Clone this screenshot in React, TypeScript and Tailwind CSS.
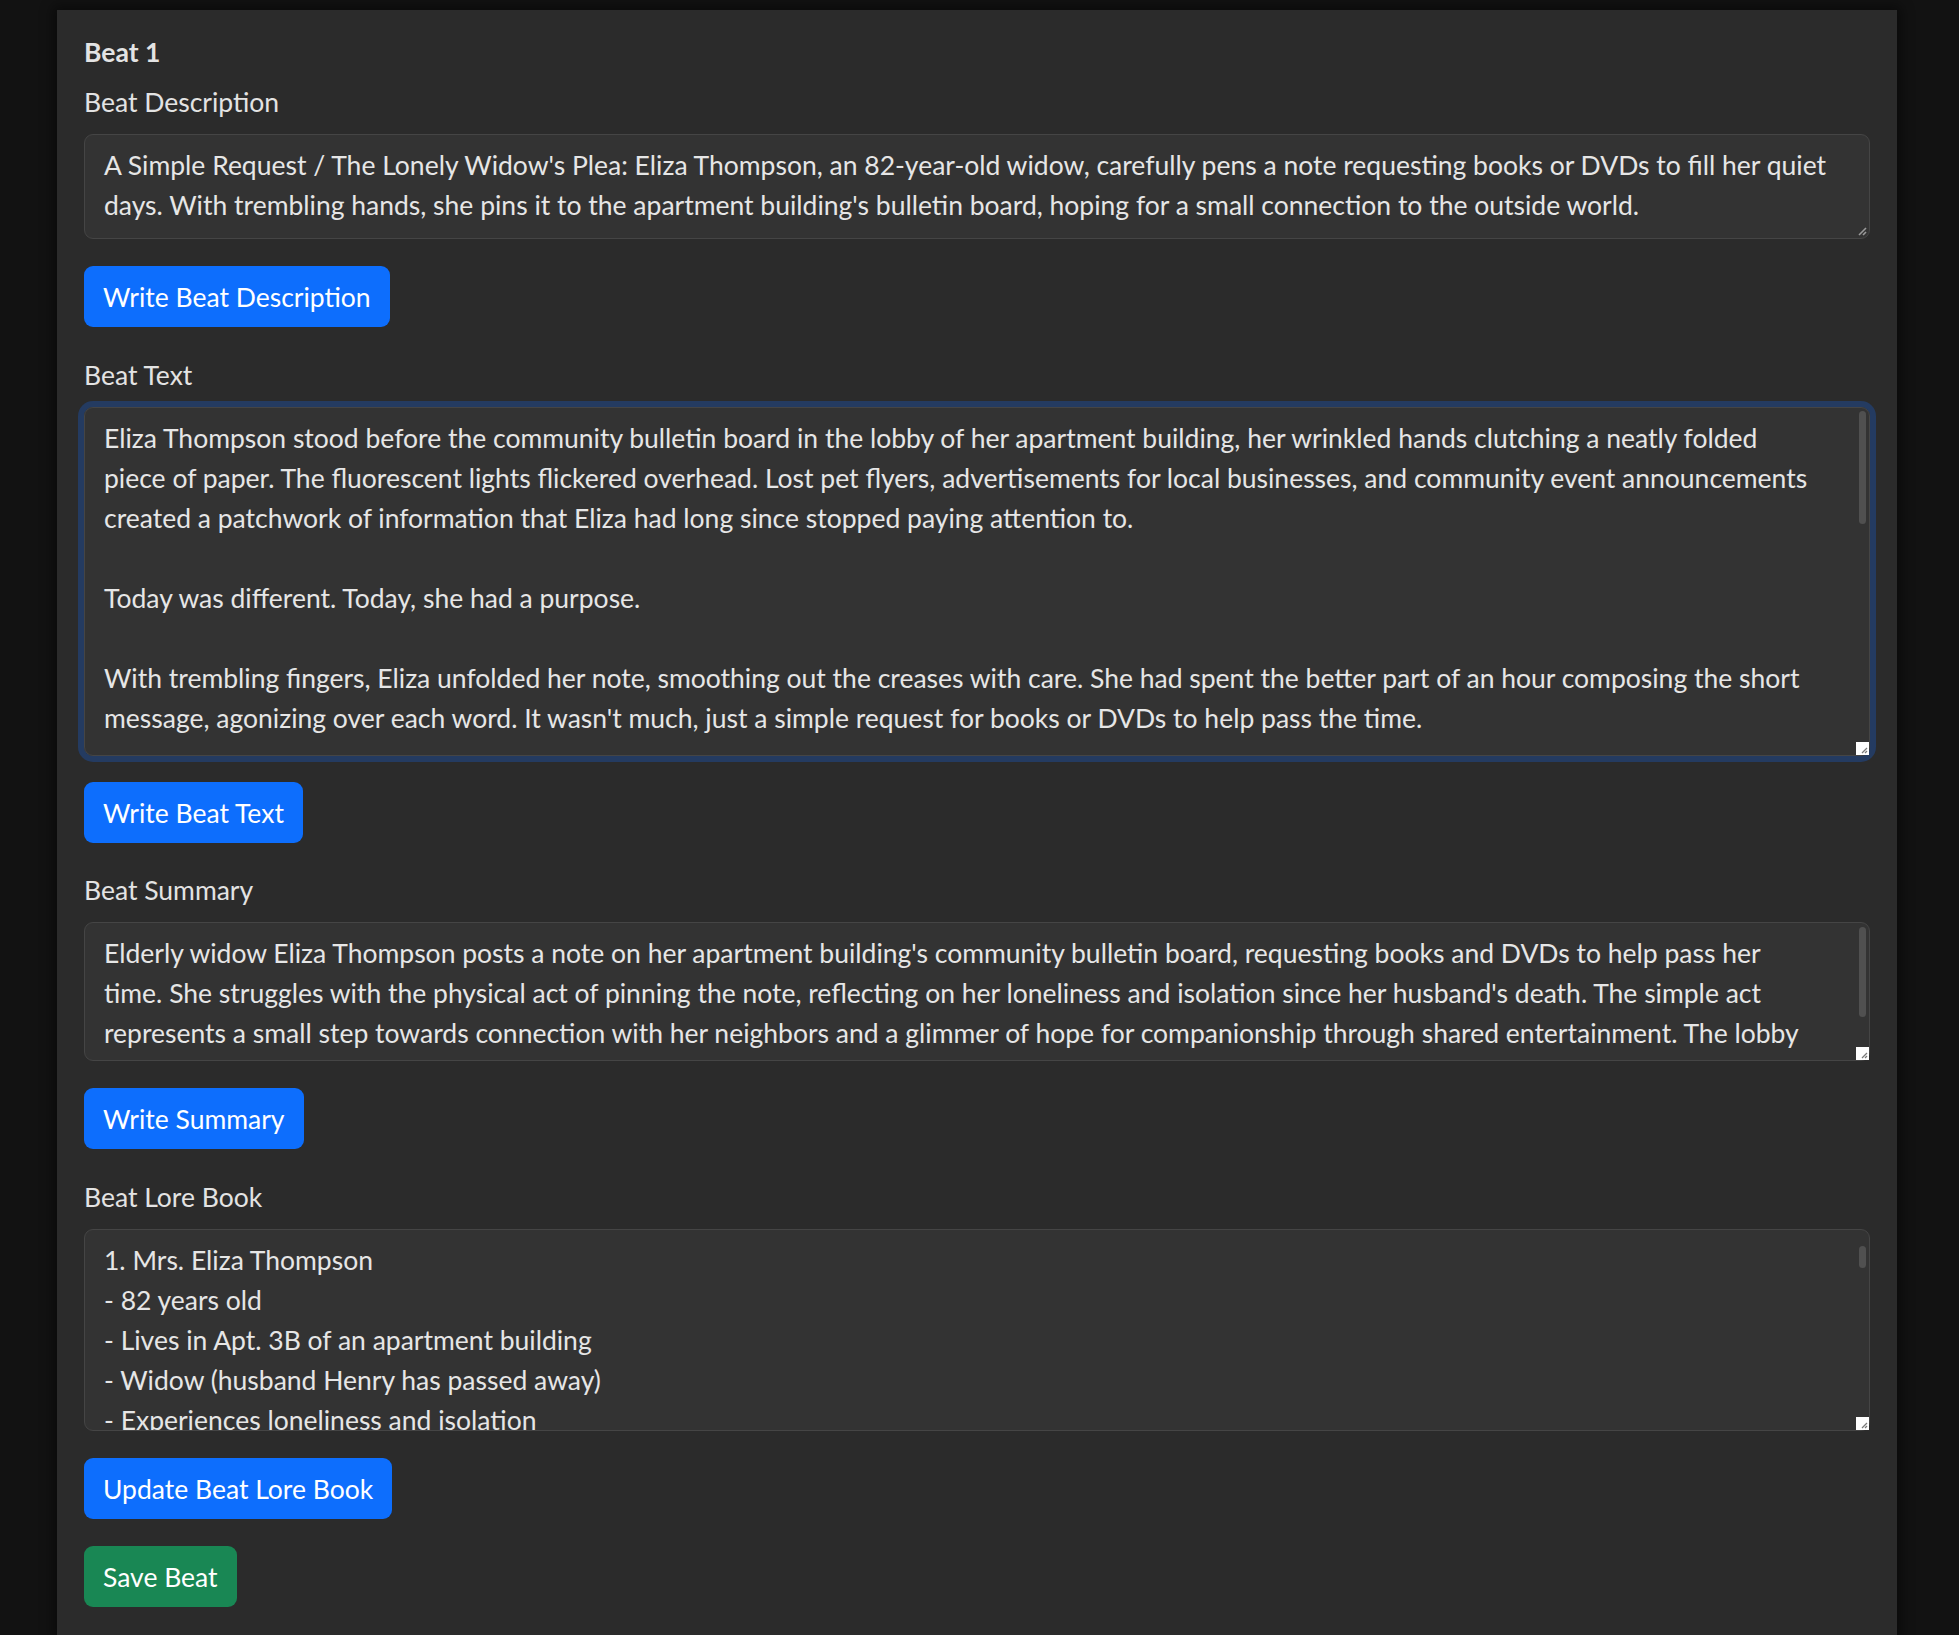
import React from 'react';

const descText =
  "A Simple Request / The Lonely Widow's Plea: Eliza Thompson, an 82-year-old widow, carefully pens a note requesting books or DVDs to fill her quiet\ndays. With trembling hands, she pins it to the apartment building's bulletin board, hoping for a small connection to the outside world.";

const beatText =
  "Eliza Thompson stood before the community bulletin board in the lobby of her apartment building, her wrinkled hands clutching a neatly folded\npiece of paper. The fluorescent lights flickered overhead. Lost pet flyers, advertisements for local businesses, and community event announcements\ncreated a patchwork of information that Eliza had long since stopped paying attention to.\n\nToday was different. Today, she had a purpose.\n\nWith trembling fingers, Eliza unfolded her note, smoothing out the creases with care. She had spent the better part of an hour composing the short\nmessage, agonizing over each word. It wasn't much, just a simple request for books or DVDs to help pass the time.\n\n";

const summaryText =
  "Elderly widow Eliza Thompson posts a note on her apartment building's community bulletin board, requesting books and DVDs to help pass her\ntime. She struggles with the physical act of pinning the note, reflecting on her loneliness and isolation since her husband's death. The simple act\nrepresents a small step towards connection with her neighbors and a glimmer of hope for companionship through shared entertainment. The lobby";

const loreText =
  '1. Mrs. Eliza Thompson\n- 82 years old\n- Lives in Apt. 3B of an apartment building\n- Widow (husband Henry has passed away)\n- Experiences loneliness and isolation\n- Hopes for connection with her neighbors';

function Grip() {
  return (
    <svg width="10" height="10" viewBox="0 0 10 10" className="block">
      <path d="M9 2 L2 9" stroke="#9a9a9a" strokeWidth="1.6" />
      <path d="M9 6 L6 9" stroke="#9a9a9a" strokeWidth="1.6" />
    </svg>
  );
}

interface FieldProps {
  label: string;
  value: string;
  height: string;
  focused?: boolean;
  thumb?: { top: string; height: string };
}

function Field({ label, value, height, focused, thumb }: FieldProps) {
  return (
    <div>
      <label className="block mb-[12px]">{label}</label>
      <div
        className={`relative rounded-[9px] ${
          focused ? 'shadow-[0_0_0_6px_#243b61]' : ''
        }`}
      >
        <textarea
          readOnly
          defaultValue={value}
          className={`block w-full ${height} resize-none overflow-hidden rounded-[9px] border border-[#454545] bg-[#333333] px-[19px] py-[10px] text-[#e6e6e6] outline-none whitespace-pre-wrap`}
        />
        {thumb && (
          <span
            className={`absolute right-[4px] w-[7px] rounded-full bg-[#505050] ${thumb.top} ${thumb.height}`}
          />
        )}
        {thumb ? (
          <span className="absolute right-[1px] bottom-[1px] flex h-[13px] w-[13px] items-end justify-end bg-white pr-[1px] pb-[1px]">
            <svg width="8" height="8" viewBox="0 0 8 8" className="block">
              <path d="M7 2 L2 7" stroke="#7a7a7a" strokeWidth="1.3" />
              <path d="M7 5 L5 7" stroke="#7a7a7a" strokeWidth="1.3" />
            </svg>
          </span>
        ) : (
          <span className="absolute right-[3px] bottom-[3px]">
            <Grip />
          </span>
        )}
      </div>
    </div>
  );
}

function Btn({ children, green }: { children: React.ReactNode; green?: boolean }) {
  return (
    <button
      className={`h-[61px] rounded-[9px] px-[19px] text-white ${
        green ? 'bg-[#198754]' : 'bg-[#0d6efd]'
      }`}
    >
      {children}
    </button>
  );
}

export default function App() {
  return (
    <div className="min-h-[1635px] bg-[#121212] font-['Lato',sans-serif] text-[26.5px] leading-[40px] text-[#e3e3e3]">
      <div className="ml-[57px] mr-[62px] pt-[10px]">
        <div className="min-h-[1625px] bg-[#2b2b2b] p-[27px] shadow-[0_0_12px_4px_rgba(0,0,0,0.45)]">
          <h6 className="mb-[14px] font-bold leading-[32px] mt-[-1px]">Beat 1</h6>

          <Field label="Beat Description" value={descText} height="h-[105px]" />
          <div className="mt-[27px]">
            <Btn>Write Beat Description</Btn>
          </div>

          <div className="mt-[28px]">
            <Field
              label="Beat Text"
              value={beatText}
              height="h-[349px]"
              focused
              thumb={{ top: 'top-[4px]', height: 'h-[113px]' }}
            />
          </div>
          <div className="mt-[26px]">
            <Btn>Write Beat Text</Btn>
          </div>

          <div className="mt-[27px]">
            <Field
              label="Beat Summary"
              value={summaryText}
              height="h-[139px]"
              thumb={{ top: 'top-[5px]', height: 'h-[90px]' }}
            />
          </div>
          <div className="mt-[27px]">
            <Btn>Write Summary</Btn>
          </div>

          <div className="mt-[28px]">
            <Field
              label="Beat Lore Book"
              value={loreText}
              height="h-[202px]"
              thumb={{ top: 'top-[17px]', height: 'h-[22px]' }}
            />
          </div>
          <div className="mt-[27px]">
            <Btn>Update Beat Lore Book</Btn>
          </div>
          <div className="mt-[27px]">
            <Btn green>Save Beat</Btn>
          </div>
        </div>
      </div>
    </div>
  );
}
